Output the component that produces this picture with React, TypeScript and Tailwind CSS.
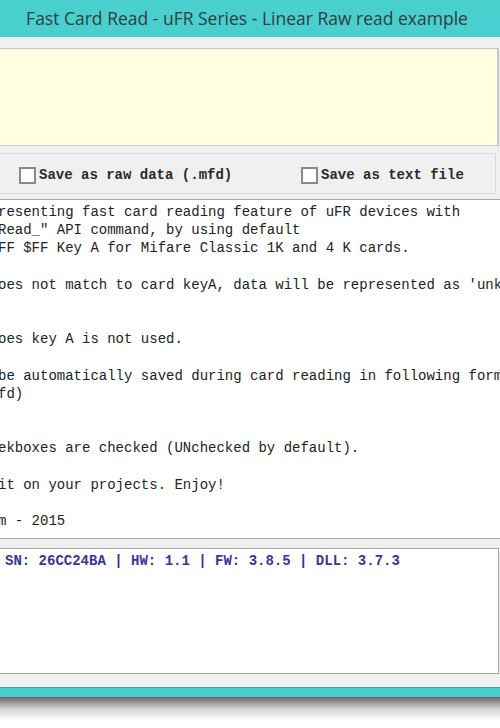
import React from 'react';

const infoLines: string[] = [
  'resenting fast card reading feature of uFR devices with',
  'Read_" API command, by using default',
  'FF $FF Key A for Mifare Classic 1K and 4 K cards.',
  '',
  "oes not match to card keyA, data will be represented as 'unknown'",
  '',
  '',
  'oes key A is not used.',
  '',
  'be automatically saved during card reading in following format:',
  'fd)',
  '',
  '',
  'ekboxes are checked (UNchecked by default).',
  '',
  'it on your projects. Enjoy!',
  '',
  'm - 2015',
];

function CheckOption({ label }: { label: string }) {
  return (
    <label className="flex items-center gap-[3px]">
      <span className="w-[17px] h-[17px] border-2 border-[#8a8a8a] bg-white" />
      <span className="font-bold text-[14px] text-[#2a2a2a]">{label}</span>
    </label>
  );
}

export default function App() {
  return (
    <div
      className="w-[500px] h-[728px] bg-white overflow-hidden flex flex-col"
      style={{ fontFamily: '"Liberation Mono", monospace' }}
    >
      {/* title bar */}
      <div className="h-[37px] shrink-0 bg-[#4acfcf] flex items-center justify-center pr-[6px]">
        <span
          className="text-[17.5px] text-[#2f3e3e]"
          style={{ fontFamily: '"Open Sans", sans-serif' }}
        >
          Fast Card Read - uFR Series - Linear Raw read example
        </span>
      </div>

      <div className="bg-[#f0f0f0] flex flex-col pt-[11px]">
        {/* card data area */}
        <div className="h-[98px] mr-[1px] bg-[#ffffe1] border-t border-b border-r-2 border-[#c6c6c6]" />

        {/* save options */}
        <div className="h-[41px] mt-[7px] mr-[4px] border-t border-b border-r border-[#dadada] flex items-center pt-[4px]">
          <div className="ml-[19px] w-[282px]">
            <CheckOption label="Save as raw data (.mfd)" />
          </div>
          <CheckOption label="Save as text file" />
        </div>

        {/* info text */}
        <div className="h-[340px] mt-[5px] bg-white border-t border-b border-[#a8a8a8] overflow-hidden pt-[3px]">
          <div className="-ml-[2px] text-[14px] leading-[18.2px] text-[#222] whitespace-pre">
            {infoLines.map((line, i) => (
              <div key={i} className="h-[18.2px]">
                {line}
              </div>
            ))}
          </div>
        </div>

        {/* reader status */}
        <div className="h-[126px] mt-[9px] mr-[1px] bg-white border-t border-b border-r border-[#a8a8a8] pt-[3px] pl-[5px]">
          <div className="font-bold text-[14px] leading-[18px] text-[#35379a] whitespace-pre">
            SN: 26CC24BA | HW: 1.1 | FW: 3.8.5 | DLL: 3.7.3
          </div>
        </div>

        <div className="h-[13px]" />
      </div>

      {/* bottom frame edge */}
      <div className="h-[10px] shrink-0 bg-[#48cccc] border-t border-[#3aa9a9]" />
      <div className="h-[24px] shrink-0 bg-gradient-to-b from-[#666] via-[#d4d4d4] to-white" />
    </div>
  );
}
